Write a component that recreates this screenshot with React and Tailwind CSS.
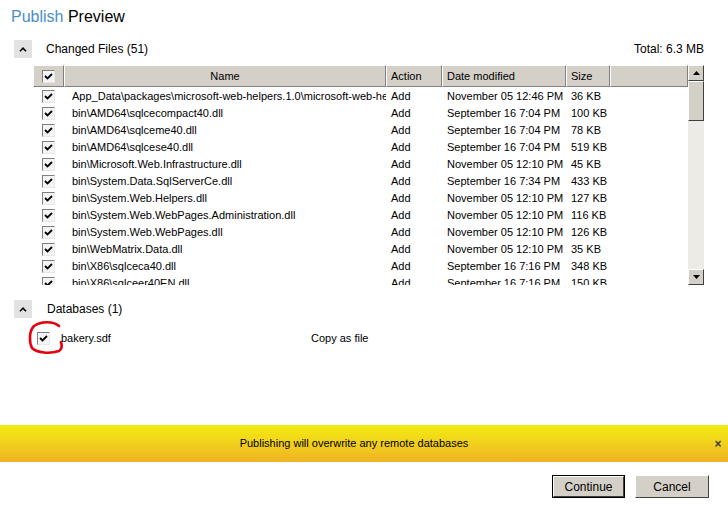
import React from 'react'

const files = [
  ['App_Data\\packages\\microsoft-web-helpers.1.0\\microsoft-web-helpers.1.0.nupkg', 'November 05 12:46 PM', '36 KB'],
  ['bin\\AMD64\\sqlcecompact40.dll', 'September 16 7:04 PM', '100 KB'],
  ['bin\\AMD64\\sqlceme40.dll', 'September 16 7:04 PM', '78 KB'],
  ['bin\\AMD64\\sqlcese40.dll', 'September 16 7:04 PM', '519 KB'],
  ['bin\\Microsoft.Web.Infrastructure.dll', 'November 05 12:10 PM', '45 KB'],
  ['bin\\System.Data.SqlServerCe.dll', 'September 16 7:34 PM', '433 KB'],
  ['bin\\System.Web.Helpers.dll', 'November 05 12:10 PM', '127 KB'],
  ['bin\\System.Web.WebPages.Administration.dll', 'November 05 12:10 PM', '116 KB'],
  ['bin\\System.Web.WebPages.dll', 'November 05 12:10 PM', '126 KB'],
  ['bin\\WebMatrix.Data.dll', 'November 05 12:10 PM', '35 KB'],
  ['bin\\X86\\sqlceca40.dll', 'September 16 7:16 PM', '348 KB'],
  ['bin\\X86\\sqlceer40EN.dll', 'September 16 7:16 PM', '150 KB'],
]

const cols = 'grid grid-cols-[31px_322px_56px_124px_44px_1fr]'

// classic windows checkbox, checked
const Check = () => (
  <span className="flex h-[13px] w-[13px] items-center justify-center border border-t-[#808080] border-l-[#808080] border-b-[#e8e8e8] border-r-[#e8e8e8] bg-[#f4f4f4]">
    <svg width="9" height="9" viewBox="0 0 9 9">
      <path d="M1 4 L3.5 6.5 L8 2" fill="none" stroke="#000" strokeWidth="1.8" />
    </svg>
  </span>
)

const Collapse = () => (
  <span className="flex h-[18px] w-[18px] items-center justify-center bg-[#e2e2e2]">
    <svg width="8" height="5" viewBox="0 0 8 5">
      <path d="M1 4.2 L4 1.2 L7 4.2" fill="none" stroke="#000" strokeWidth="1.6" />
    </svg>
  </span>
)

const HeadCell = ({ children, center }) => (
  <div
    className={`flex h-[22px] items-center overflow-hidden whitespace-nowrap border-t border-l border-t-white border-l-white border-r border-b border-r-[#808080] border-b-[#808080] bg-[#d4d0c8] px-[4px] pt-[1px] ${center ? 'justify-center' : ''}`}
  >
    {children}
  </div>
)

const ArrowBtn = ({ down }) => (
  <div className="flex h-[16px] w-[16px] items-center justify-center border border-t-white border-l-white border-b-[#404040] border-r-[#404040] bg-[#d4d0c8]">
    <svg width="7" height="4" viewBox="0 0 7 4">
      <path d={down ? 'M0 0 H7 L3.5 4 Z' : 'M0 4 H7 L3.5 0 Z'} fill="#000" />
    </svg>
  </div>
)

const Button = ({ children, primary }) => (
  <div className={primary ? 'border border-black' : ''}>
    <div
      className={`flex ${primary ? 'h-[21px] w-[71px]' : 'h-[23px] w-[74px]'} items-center justify-center border border-t-white border-l-white border-b-[#404040] border-r-[#404040] bg-[#d4d0c8] text-[12px] text-black`}
    >
      {children}
    </div>
  </div>
)

export default function App() {
  return (
    <div className="relative h-[507px] w-[728px] overflow-hidden bg-white font-['Liberation_Sans',Arial,sans-serif] text-[11px] text-black">
      <div className="pl-[11px] pt-[7px] text-[16px] leading-[20px]">
        <span className="text-[#4a8fc4]">Publish</span> Preview
      </div>

      <div className="mt-[13px] flex h-[18px] items-center pl-[14px] pr-[24px] text-[12px]">
        <Collapse />
        <span className="ml-[14px] flex-1">Changed Files (51)</span>
        <span>Total: 6.3 MB</span>
      </div>

      <div className="ml-[33px] mt-[7px] flex h-[220px] w-[671px]">
        <div className="flex w-[655px] flex-col">
          <div className={cols}>
            <HeadCell center>
              <Check />
            </HeadCell>
            <HeadCell center>Name</HeadCell>
            <HeadCell>Action</HeadCell>
            <HeadCell>Date modified</HeadCell>
            <HeadCell>Size</HeadCell>
            <HeadCell />
          </div>
          <div className="h-[198px] overflow-hidden pt-[1px]">
            {files.map(([name, date, size]) => (
              <div key={name} className={`${cols} h-[17px] items-center whitespace-nowrap`}>
                <div className="flex justify-center">
                  <Check />
                </div>
                <div className="overflow-hidden pl-[8px] pr-[4px]">{name}</div>
                <div className="pl-[5px]">Add</div>
                <div className="pl-[5px]">{date}</div>
                <div className="pl-[5px]">{size}</div>
                <div />
              </div>
            ))}
          </div>
        </div>
        <div className="flex w-[16px] flex-col bg-[#ecebe5]">
          <ArrowBtn />
          <div className="h-[40px] border border-t-white border-l-white border-b-[#404040] border-r-[#404040] bg-[#d4d0c8]" />
          <div className="flex-1" />
          <ArrowBtn down />
        </div>
      </div>

      <div className="mt-[15px] flex h-[18px] items-center pl-[14px] text-[12px]">
        <Collapse />
        <span className="ml-[15px]">Databases (1)</span>
      </div>

      <div className="relative mt-[13px] flex h-[14px] items-center pl-[37px]">
        <Check />
        <span className="ml-[11px] w-[250px]">bakery.sdf</span>
        <span>Copy as file</span>
        <svg className="absolute left-[28px] top-[-11px]" width="38" height="36" viewBox="0 0 38 36">
          <path
            d="M31 6 C25 1 13 1 6 6 C1 11 1 22 4 28 C9 33 22 34 31 31 C34 29 34 25 33 22"
            fill="none"
            stroke="#e4000c"
            strokeWidth="2.6"
            strokeLinecap="round"
          />
        </svg>
      </div>

      <div className="mt-[80px] flex h-[37px] items-center bg-gradient-to-b from-[#f2ec0e] to-[#efb323]">
        <span className="flex-1 text-center">Publishing will overwrite any remote databases</span>
        <span className="w-[20px] text-center text-[12px] font-bold text-[#404040]">×</span>
      </div>

      <div className="mt-[13px] flex justify-end gap-[10px] pr-[19px]">
        <Button primary>Continue</Button>
        <Button>Cancel</Button>
      </div>
    </div>
  )
}
